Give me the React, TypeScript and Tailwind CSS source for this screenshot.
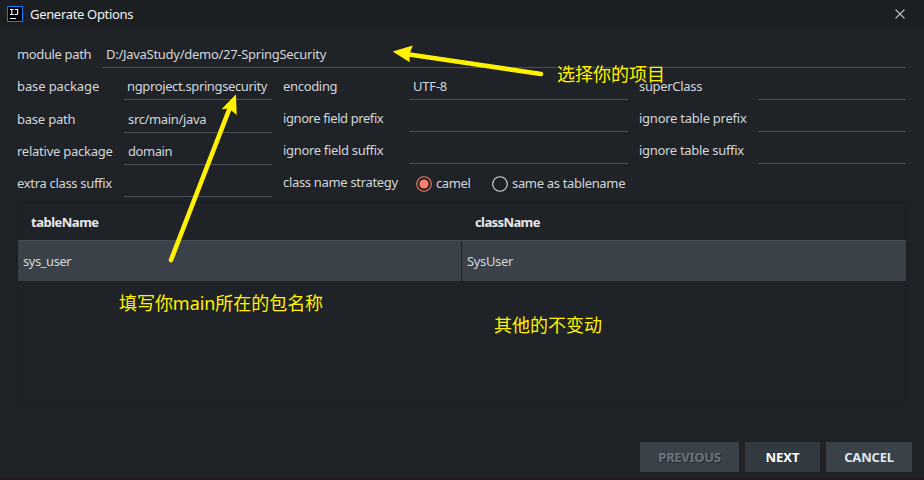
import React from "react";

type FieldProps = {
  label: string;
  labelWidth: string;
  labelClass?: string;
  value?: string;
  valueClass?: string;
  height?: string;
};

function Field({ label, labelWidth, labelClass = "", value = "", valueClass = "", height = "h-8" }: FieldProps) {
  return (
    <div className={`flex ${height}`}>
      <label className={`flex shrink-0 items-center whitespace-nowrap pt-1 ${labelWidth}`}>
        <span className={labelClass}>{label}</span>
      </label>
      <div className="flex min-w-0 flex-1 items-center whitespace-nowrap border-b border-[#4b4f56] pl-1 pt-[5px]">
        <span className={valueClass}>{value}</span>
      </div>
    </div>
  );
}

function Radio({ checked = false }: { checked?: boolean }) {
  return (
    <svg width="16" height="16" viewBox="0 0 16 16" fill="none" className="mt-1 shrink-0">
      <circle cx="8" cy="8" r="7.3" stroke={checked ? "#f77c67" : "#d5d9dc"} strokeWidth="1.1" />
      {checked && <circle cx="8" cy="8" r="4.6" fill="#ff806b" />}
    </svg>
  );
}

export default function App() {
  return (
    <div className="relative flex h-[480px] w-[924px] flex-col overflow-hidden border-b-2 border-[#1f171b] bg-[#1f2226] font-['Noto_Sans','Noto_Sans_CJK_SC',sans-serif] text-[13px] leading-5 text-[#d3d7da]">
      <header className="flex h-7 shrink-0 items-center bg-[#1b1f21] pl-[7px] pr-[19px]">
        <svg width="16" height="16" viewBox="0 0 16 16" fill="none">
          <rect x=".5" y=".5" width="15" height="15" fill="#000" stroke="#087cfa" />
          <path d="M3 3.5h3.6M4.8 3.5v5M3 8.5h3.6M8 3.5h2.7v3.7q0 1.3-1.3 1.3H7.5M3 12.5h6" stroke="#fff" strokeWidth="1.1" />
        </svg>
        <h1 className="ml-[7px] flex-1 text-[13px] tracking-[-0.32px] text-[#f1f1f1]">Generate Options</h1>
        <svg width="10" height="10" viewBox="0 0 10 10" stroke="#c4c8ca" strokeWidth="1.3">
          <path d="m.6.6 8.8 8.8M9.4.6.6 9.4" />
        </svg>
      </header>

      <main className="pl-[17px] pr-[18px] pt-2">
        <Field
          label="module path"
          labelWidth="w-[85px]"
          labelClass="tracking-[-0.36px]"
          value="D:/JavaStudy/demo/27-SpringSecurity"
          valueClass="tracking-[-0.28px]"
        />
        <div className="flex">
          <section className="mr-[11px] w-[255px]">
            <Field
              label="base package"
              labelWidth="w-[107px]"
              labelClass="tracking-[-0.1px]"
              value="ngproject.springsecurity"
              valueClass="-ml-px tracking-[-0.37px]"
            />
            <Field
              label="base path"
              labelWidth="w-[107px]"
              labelClass="tracking-[-0.22px]"
              value="src/main/java"
              valueClass="tracking-[-0.35px]"
              height="h-[33px]"
            />
            <Field
              label="relative package"
              labelWidth="w-[107px]"
              labelClass="tracking-[-0.25px]"
              value="domain"
              valueClass="tracking-[-0.45px]"
            />
            <Field label="extra class suffix" labelWidth="w-[107px]" labelClass="tracking-[-0.32px]" />
          </section>
          <section className="mr-[11px] w-[345px]">
            <Field
              label="encoding"
              labelWidth="w-[126px]"
              labelClass="tracking-[-0.32px]"
              value="UTF-8"
              valueClass="tracking-[-0.2px]"
            />
            <Field label="ignore field prefix" labelWidth="w-[126px]" labelClass="tracking-[-0.41px]" />
            <Field label="ignore field suffix" labelWidth="w-[126px]" labelClass="tracking-[-0.32px]" />
            <div className="flex h-8 items-center whitespace-nowrap pt-1">
              <span className="w-[133px] shrink-0 tracking-[-0.32px]">class name strategy</span>
              <Radio checked />
              <span className="ml-1 w-[56px] shrink-0 pt-0.5 tracking-[-0.4px]">camel</span>
              <Radio />
              <span className="ml-1 pt-0.5 tracking-[-0.33px]">same as tablename</span>
            </div>
          </section>
          <section className="flex-1">
            <Field label="superClass" labelWidth="w-[119px]" labelClass="tracking-[-0.32px]" />
            <Field label="ignore table prefix" labelWidth="w-[119px]" labelClass="tracking-[-0.25px]" />
            <Field label="ignore table suffix" labelWidth="w-[119px]" labelClass="tracking-[-0.3px]" />
          </section>
        </div>
      </main>

      <div className="mx-[17px] mt-[5px] h-[203px] border border-[#1b1e22]">
        <div className="grid h-[37px] grid-cols-2 items-center font-bold tracking-[-0.5px] text-[#e7eaec]">
          <span className="pl-[13px]">tableName</span>
          <span className="pl-[13px] tracking-[-0.6px]">className</span>
        </div>
        <div className="grid h-[41px] grid-cols-2 border-t border-[#454d54] bg-[#3a4149]">
          <div className="flex items-center border-r border-[#1f2226] pb-px pl-[5px] tracking-[-0.45px]">sys_user</div>
          <div className="flex items-center pb-px pl-[5px] tracking-[-0.36px]">SysUser</div>
        </div>
      </div>

      <footer className="mt-auto mb-[6px] flex h-[30px] justify-end gap-1.5 pr-3 font-bold">
        <button className="w-[99px] bg-[#3a4149] tracking-[-0.3px] text-[#6c737b] [text-shadow:1px_1px_#25292e]">PREVIOUS</button>
        <button className="w-[75px] bg-[#333941] text-white">NEXT</button>
        <button className="w-[86px] bg-[#3a4149] tracking-[-0.2px] text-[#dfe8f0]">CANCEL</button>
      </footer>

      <div className="pointer-events-none absolute inset-0 text-[18px] leading-6 whitespace-nowrap text-[#fff200]">
        <svg width="924" height="480" viewBox="0 0 924 480" className="absolute inset-0" stroke="#fff200" strokeWidth="4.6" strokeLinecap="round">
          <path d="M541 74 406 54M171 260 229 110" />
          <path d="M392.7 51.5 412.7 45.5 409.5 54 409.7 62.3Z" fill="#fff200" stroke="none" />
          <path d="M236 94.3 221.5 109.3 229 108.5 236.700 115Z" fill="#fff200" stroke="none" />
        </svg>
        <span className="absolute left-[557px] top-[62px]">选择你的项目</span>
        <span className="absolute left-[119px] top-[291px] tracking-[-0.05px]">填写你main所在的包名称</span>
        <span className="absolute left-[494px] top-[313px]">其他的不变动</span>
      </div>
    </div>
  );
}
